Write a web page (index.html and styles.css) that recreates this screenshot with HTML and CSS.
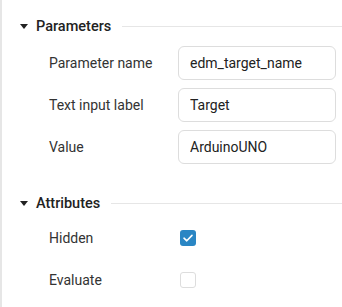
FILE: index.html
```html
<!DOCTYPE html>
<html>

<head>
    <meta charset="UTF-8">
    <link rel="stylesheet" href="styles.css">
</head>

<body>
    <div class="panel">
        <div class="section">
            <div class="heading">
                <span class="caret"></span>
                <span class="title">Parameters</span>
                <span class="rule"></span>
            </div>
            <div class="rows">
                <label class="label">Parameter name</label>
                <input class="field" type="text" value="edm_target_name">
                <label class="label">Text input label</label>
                <input class="field" type="text" value="Target">
                <label class="label">Value</label>
                <input class="field" type="text" value="ArduinoUNO">
            </div>
        </div>

        <div class="section attrs">
            <div class="heading">
                <span class="caret"></span>
                <span class="title">Attributes</span>
                <span class="rule"></span>
            </div>
            <div class="rows">
                <label class="label">Hidden</label>
                <div class="cell">
                    <span class="box checked">
                        <svg width="16" height="16" viewBox="0 0 16 16">
                            <path d="M4 8.2 L6.8 10.8 L12 5.4" fill="none" stroke="white" stroke-width="1.6"
                                stroke-linecap="round" stroke-linejoin="round" />
                        </svg>
                    </span>
                </div>
                <label class="label">Evaluate</label>
                <div class="cell">
                    <span class="box"></span>
                </div>
            </div>
        </div>
    </div>
</body>

</html>
```

FILE: styles.css
```css
body {
    margin: 0;
    background-color: white;
    font-family: Roboto, "Liberation Sans", sans-serif;
    color: #333;
}

.panel {
    border-left: 2px solid #e6e6e6;
    padding-top: 14px;
    height: 307px;
    box-sizing: border-box;
}

.section + .section {
    margin-top: 27px;
}

.heading {
    display: flex;
    align-items: center;
    height: 24px;
    padding-left: 18px;
    margin-bottom: 8px;
}

.attrs .heading {
    margin-bottom: 6px;
}

.caret {
    width: 0;
    height: 0;
    border-left: 4.5px solid transparent;
    border-right: 4.5px solid transparent;
    border-top: 5px solid #222;
    margin-right: 8px;
}

.title {
    font-size: 14.5px;
    font-weight: 500;
    color: #222;
}

.rule {
    flex: 1;
    height: 1px;
    background-color: #e6e6e6;
    margin-left: 11px;
}

.rows {
    display: grid;
    grid-template-columns: 129px 1fr;
    grid-auto-rows: 34px;
    row-gap: 8px;
    padding-left: 47px;
    padding-right: 6px;
    align-items: center;
}

.label {
    font-size: 14px;
    color: #333;
}

.field {
    height: 34px;
    box-sizing: border-box;
    border: 1px solid #dddddd;
    border-radius: 6px;
    padding: 0 11px;
    font-family: Roboto, "Liberation Sans", sans-serif;
    font-size: 14px;
    color: #222;
    width: 100%;
    outline: none;
}

.cell {
    display: flex;
    align-items: center;
    height: 34px;
    padding-left: 2px;
}

.box {
    width: 16px;
    height: 16px;
    box-sizing: border-box;
    border: 1px solid #dddddd;
    border-radius: 3px;
    display: flex;
}

.box.checked {
    border: none;
    background-color: #2a86c4;
}
```
